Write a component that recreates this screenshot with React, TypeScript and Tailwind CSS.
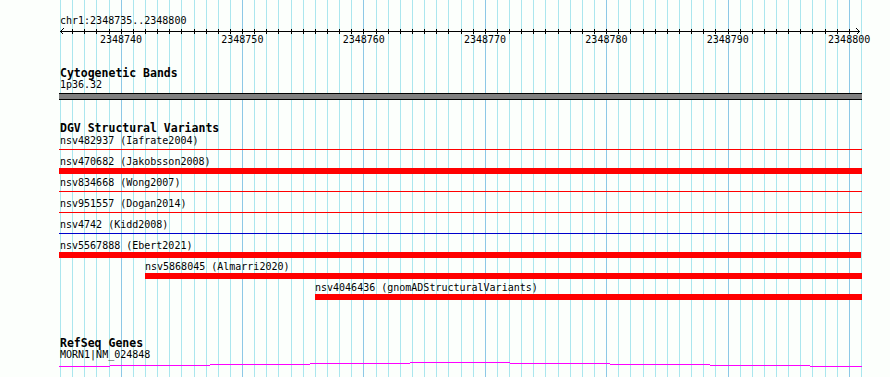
import React from 'react';

const LEFT = 60;
const BP = 801 / 66; // pixels per base
const baseX = (i: number) => Math.round(LEFT + i * BP);

type Variant = { label: string; start: number; kind: 'thin' | 'bar'; color: string; end?: number };

const variants: Variant[] = [
  { label: 'nsv482937 (Iafrate2004)', start: 0, kind: 'thin', color: '#ff0000' },
  { label: 'nsv470682 (Jakobsson2008)', start: 0, kind: 'bar', color: '#ff0000' },
  { label: 'nsv834668 (Wong2007)', start: 0, kind: 'thin', color: '#ff0000' },
  { label: 'nsv951557 (Dogan2014)', start: 0, kind: 'thin', color: '#ff0000' },
  { label: 'nsv4742 (Kidd2008)', start: 0, kind: 'thin', color: '#0000cc' },
  { label: 'nsv5567888 (Ebert2021)', start: 0, kind: 'bar', color: '#ff0000', end: 860 },
  { label: 'nsv5868045 (Almarri2020)', start: 7, kind: 'bar', color: '#ff0000' },
  { label: 'nsv4046436 (gnomADStructuralVariants)', start: 21, kind: 'bar', color: '#ff0000' },
];

const geneSteps = [
  [59, 110, 5], [110, 210, 4], [210, 310, 3], [310, 410, 2], [410, 510, 1],
  [510, 610, 2], [610, 710, 3], [710, 810, 4], [810, 862, 5],
];

const ticks = Array.from({ length: 65 }, (_, k) => k + 1);
const tickLabels = [5, 15, 25, 35, 45, 55, 65];

const GridLines = () => (
  <svg className="absolute inset-0" width={890} height={377} shapeRendering="crispEdges">
    {Array.from({ length: 67 }, (_, i) => (
      <rect key={i} x={baseX(i)} y={0} width={1} height={377} fill={(i + 5) % 10 === 0 ? '#8cc8e6' : '#aae6ee'} />
    ))}
  </svg>
);

const Ruler = () => (
  <svg className="-ml-px block" width={803} height={7} shapeRendering="crispEdges">
    <rect x={1} y={4} width={800} height={1} fill="#000" />
    {ticks.map((i) => (
      <rect key={i} x={baseX(i) - 59} y={2} width={1} height={5} fill="#000" />
    ))}
    <path d="M5 1 L1.5 4.5 L5 8" stroke="#000" fill="none" strokeWidth={1} shapeRendering="auto" />
    <path d="M797 1 L800.5 4.5 L797 8" stroke="#000" fill="none" strokeWidth={1} shapeRendering="auto" />
  </svg>
);

const VariantRow: React.FC<{ v: Variant }> = ({ v }) => {
  const x0 = v.start === 0 ? 59 : baseX(v.start);
  const x1 = v.end ?? 861;
  return (
    <div className="h-[21px]">
      <div className="leading-[12px] whitespace-nowrap" style={{ marginLeft: x0 === 59 ? 0 : x0 - LEFT }}>
        {v.label}
      </div>
      <div className="h-[6px]" style={{ marginLeft: x0 - LEFT, width: x1 - x0 + 1 }}>
        {v.kind === 'bar' ? (
          <div className="h-[6px]" style={{ background: v.color }} />
        ) : (
          <div className="h-px mt-[2px]" style={{ background: v.color }} />
        )}
      </div>
    </div>
  );
};

export default function App() {
  return (
    <div className="relative w-[890px] h-[377px] overflow-hidden bg-[#fcfffc] text-black font-['DejaVu_Sans_Mono',monospace] text-[10px]">
      <GridLines />
      <div className="relative ml-[60px] w-[802px] pt-[15px]">
        {/* Ruler */}
        <div className="leading-[12px]">chr1:2348735..2348800</div>
        <Ruler />
        <div className="relative h-[12px] leading-[12px]">
          {tickLabels.map((i) => (
            <span key={i} className="absolute top-0 -translate-x-1/2" style={{ left: i * BP + 0.3 }}>
              {2348735 + i}
            </span>
          ))}
        </div>

        {/* Cytogenetic Bands */}
        <div className="mt-[21px] font-bold text-[11.5px] leading-[12px]">Cytogenetic Bands</div>
        <div className="leading-[12px]">1p36.32</div>
        <div className="-ml-px mt-[2px] w-[803px] h-[7px] border-y border-black bg-[#808080]" />

        {/* DGV */}
        <div className="mt-[22px] font-bold text-[11.5px] leading-[12px]">DGV Structural Variants</div>
        <div className="mt-px">
          {variants.map((v) => (
            <VariantRow key={v.label} v={v} />
          ))}
        </div>

        {/* RefSeq */}
        <div className="mt-[34px] font-bold text-[11.5px] leading-[12px]">RefSeq Genes</div>
        <div className="leading-[12px]">MORN1|NM_024848</div>
        <svg className="-ml-px block" width={803} height={8} shapeRendering="crispEdges">
          {geneSteps.map(([a, b, y]) => (
            <rect key={a} x={a - 59} y={y} width={b - a} height={1} fill="#ff00ff" />
          ))}
        </svg>
      </div>
    </div>
  );
}
